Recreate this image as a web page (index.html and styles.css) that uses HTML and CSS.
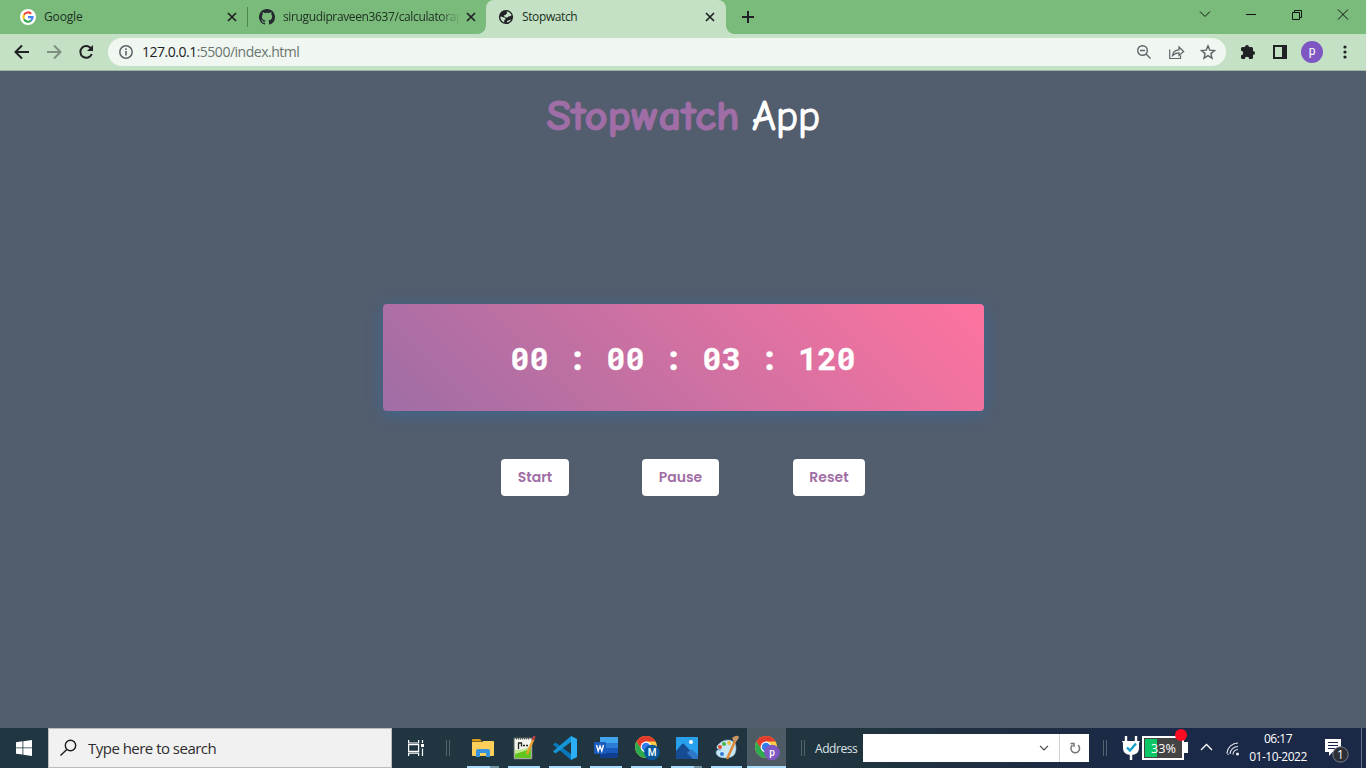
FILE: index.html
```
<!DOCTYPE html>
<html lang="en">
<head>
<meta charset="utf-8">
<title>Stopwatch</title>
<link rel="stylesheet" href="styles.css">
</head>
<body>
<div class="screen">
  <header class="tabs">
    <div class="tab tab-google">
      <svg class="fav" width="16" height="16" viewBox="0 0 16 16"><circle cx="8" cy="8" r="8" fill="#fff"/><g fill="none" stroke-width="2.1"><path d="M4 5.7A4.6 4.6 0 0 1 11.2 4.7" stroke="#ea4335"/><path d="M4 5.7A4.8 4.8 0 0 0 4 10.3" stroke="#fbbc05"/><path d="M4 10.3A4.6 4.6 0 0 0 11 11.6" stroke="#34a853"/><path d="M8 8.1H12.6A4.6 4.6 0 0 1 11 11.6" stroke="#4285f4"/></g></svg>
      <span class="tab-title t-google">Google</span>
      <svg class="close" width="10" height="10" viewBox="0 0 10 10"><path d="M1 1l8 8M9 1l-8 8"/></svg>
    </div>
    <div class="tab tab-github">
      <svg class="fav" width="16" height="16" viewBox="0 0 16 16"><path fill="#24292f" d="M8 0C3.58 0 0 3.58 0 8c0 3.54 2.29 6.53 5.47 7.59.4.07.55-.17.55-.38 0-.19-.01-.82-.01-1.49-2.01.37-2.53-.49-2.69-.94-.09-.23-.48-.94-.82-1.13-.28-.15-.68-.52-.01-.53.63-.01 1.08.58 1.23.82.72 1.21 1.87.87 2.33.66.07-.52.28-.87.51-1.07-1.78-.2-3.64-.89-3.64-3.95 0-.87.31-1.59.82-2.15-.08-.2-.36-1.02.08-2.12 0 0 .67-.21 2.2.82.64-.18 1.32-.27 2-.27s1.36.09 2 .27c1.53-1.04 2.2-.82 2.2-.82.44 1.1.16 1.92.08 2.12.51.56.82 1.27.82 2.15 0 3.07-1.87 3.75-3.65 3.95.29.25.54.73.54 1.48 0 1.07-.01 1.93-.01 2.2 0 .21.15.46.55.38A8.01 8.01 0 0 0 16 8c0-4.42-3.58-8-8-8z"/></svg>
      <span class="tab-title t-github">sirugudipraveen3637/calculatorap</span>
      <svg class="close" width="10" height="10" viewBox="0 0 10 10"><path d="M1 1l8 8M9 1l-8 8"/></svg>
    </div>
    <div class="tab tab-active">
      <svg class="fav" width="16" height="16" viewBox="0 0 16 16"><circle cx="8" cy="8" r="7.1" fill="#202124"/><path d="M8.200 2.400c2.400 0 4.500 1.400 5.300 3.600-.4 1.200-1.200 1.500-2.200 1.300-1.200-.1-1 1.100-2 1.200H7.600c-1.200-.2-1.200-1.500-2-2 .9-.3 1.800 0 2.300-.9.2-.8.8-.9 1.300-1.300.3-.8-.7-1-.7-1.700z" fill="#c5e1c5"/><path d="M2.300 7.500c1 .1 2 .5 3 .8 1.300.2 2.200.8 2.200 1.700-.3.8-1.200.8-1.300 1.700v1.700C3.800 12.700 2.100 10.500 2.300 7.500z" fill="#c5e1c5"/><path d="M8.800 13.600c.3-1.300.3-2 1.500-2.100 1-.1 1.500-.6 2.700-1-.8 1.800-2.300 2.900-4.200 3.100z" fill="#c5e1c5"/></svg>
      <span class="tab-title t-stop">Stopwatch</span>
      <svg class="close" width="10" height="10" viewBox="0 0 10 10"><path d="M1 1l8 8M9 1l-8 8"/></svg>
    </div>
    <svg class="plus" width="12" height="12" viewBox="0 0 12 12"><path d="M6 0v12M0 6h12" stroke="#202124" stroke-width="2"/></svg>
    <svg class="window-buttons" width="156" height="16" viewBox="0 0 156 16" fill="none" stroke="#101410" stroke-width="1"><path d="M3 5.500l5 5 5-5M49 8.500h10M95.500 6.500h7v7h-7zM97.500 6.500v-2h7v7h-2M141 3.500l10 10M151 3.500l-10 10"/></svg>
  </header>

  <nav class="toolbar">
    <svg class="nav-icons" width="80" height="16" viewBox="0 0 80 16" fill="none" stroke-width="2"><path d="M15 8H2M8 1.500L1.500 8 8 14.500" stroke="#202124"/><path d="M33 8h13M40 1.500L46.500 8 40 14.500" stroke="#7d8f7e"/><path d="M77.200 4.600A5.900 5.900 0 1 0 77.800 10" stroke="#202124"/><path d="M79 1v6h-6z" fill="#202124"/></svg>
    <div class="address-pill">
      <svg width="14" height="14" viewBox="0 0 14 14"><circle cx="7" cy="7" r="6.200" fill="none" stroke="#5f6368" stroke-width="1.500"/><path d="M7 6v4.500M7 3.300v1.600" stroke="#5f6368" stroke-width="1.600"/></svg>
      <span class="url">127.0.0.1<span class="url-path">:5500/index.html</span></span>
      <svg class="pill-icons" width="80" height="16" viewBox="0 0 80 16" fill="none" stroke="#5f6368" stroke-width="1.400"><circle cx="6.500" cy="6.500" r="4.800"/><path d="M10 10l4.500 4.500M4 6.500h5"/><path d="M33.700 5.500v9h10.800v-3M36.500 11.500c.4-4 2.900-5.500 6.500-5.700V3l4.700 4.500L43 11.500V8.800c-2.700 0-4.700.7-6.500 2.700z" stroke-width="1.200"/><path d="M72 1.900l1.800 4.200 4.700.4-3.600 3.100 1.100 4.600L72 11.700l-4 2.500 1.100-4.600-3.600-3.100 4.700-.4z"/></svg>
    </div>
    <svg class="ext" width="16" height="16" viewBox="0 0 16 16"><path fill="#202124" d="M1 4.500Q1 3 2.500 3H5a2 2 0 0 1 4 0h2.500Q13 3 13 4.500V7a2 2 0 0 1 0 4v2.500q0 1.500-1.500 1.500H9.200a2.200 2.200 0 0 0-4.400 0H2.500Q1 15 1 13.500v-2.300a2.200 2.200 0 0 0 0-4.400z"/></svg>
    <svg class="panel" width="14" height="14" viewBox="0 0 14 14"><path fill="#202124" fill-rule="evenodd" d="M0 0h14v14H0zM2 2v10h7V2z"/></svg>
    <span class="avatar">p</span>
    <svg class="dots" width="4" height="14" viewBox="0 0 4 14" fill="#202124"><circle cx="2" cy="2" r="1.600"/><circle cx="2" cy="7" r="1.600"/><circle cx="2" cy="12" r="1.600"/></svg>
  </nav>

  <main class="page">
    <h1 class="heading">
      <svg width="290" height="64" viewBox="0 0 290 64">
        <text class="heading-accent" x="9.500" y="44" textLength="193" lengthAdjust="spacingAndGlyphs">Stopwatch</text>
        <text class="heading-rest" x="215" y="44" textLength="68" lengthAdjust="spacingAndGlyphs">App</text>
      </svg>
    </h1>
    <section class="timer">
      <span class="num">00</span><span class="colon">:</span><span class="num">00</span><span class="colon">:</span><span class="num">03</span><span class="colon">:</span><span class="num num-ms">120</span>
    </section>
    <div class="buttons">
      <button class="btn b-start">Start</button>
      <button class="btn b-pause">Pause</button>
      <button class="btn b-reset">Reset</button>
    </div>
  </main>

  <footer class="taskbar">
    <div class="start-btn"><svg width="16" height="16" viewBox="0 0 16 16" fill="#fff"><path d="M0 2.200l6.500-.9v6.200H0zM7.300 1.200L16 0v7.500H7.300zM0 8.300h6.500v6.300L0 13.700zM7.300 8.300H16V16l-8.700-1.200z"/></svg></div>
    <div class="search">
      <svg width="18" height="18" viewBox="0 0 18 18" fill="none" stroke="#1c1c1c" stroke-width="1.400"><circle cx="10.500" cy="6.500" r="5.200"/><path d="M6.800 10.500L.5 16.500"/></svg>
      <span class="search-text">Type here to search</span>
    </div>
    <div class="taskview"><svg width="17" height="16" viewBox="0 0 17 16" fill="none" stroke="#fff" stroke-width="1.200"><path d="M.6 0v3h10V0M.6 4.600h10v6.800h-10zM.6 16v-2.900h10V16M14.500 0v3M14.500 8.500V16"/><path d="M13 4h3v3h-3z" fill="#fff" stroke="none"/></svg></div>
    <i class="grip"></i>
    <div class="apps">
      <div class="app split"><svg width="24" height="24" viewBox="0 0 24 24"><path d="M1 4q0-1 1-1h7l2 2.500H1z" fill="#dd9a13"/><path d="M1 6h10l1.500-1H22q1 0 1 1v13q0 1-1 1H2q-1 0-1-1z" fill="#ffcf5c"/><path d="M5 21v-6q0-2 2-2h10q2 0 2 2v6h-4v-4H9v4z" fill="#3793df"/></svg></div>
      <div class="app"><svg width="24" height="24" viewBox="0 0 24 24"><path d="M2 2h18v21H2z" fill="#f3f5ef" stroke="#59625a"/><path d="M3 16q8-1 16-5v11H3z" fill="#62c51e"/><path d="M3 14q9 0 16-4v3L3 18z" fill="#bce98c"/><path d="M6.500 13V7h3v3.500M11 9.500h2M14 9.500h2" stroke="#222" stroke-width="1.300" fill="none"/><path d="M4 2.500h14" stroke="#555" stroke-dasharray="1 1" stroke-width="2"/><path d="M21.500 3L15 18" stroke="#e8a12c" stroke-width="2.400"/><path d="M22.500 0l-1.500 4" stroke="#b9404a" stroke-width="2.600"/></svg></div>
      <div class="app"><svg width="24" height="24" viewBox="0 0 24 24"><path d="M0 8.500l2.500-2L18 18v6L1 9.500z" fill="#0878bd"/><path d="M0 15.500l2.500 2L18 6V0L1 14.500z" fill="#1594d8"/><path d="M18 0l6 3v18l-6 3z" fill="#2baef4"/></svg></div>
      <div class="app"><svg width="24" height="24" viewBox="0 0 24 24"><path d="M6 1h18v6H6z" fill="#41a5ee"/><path d="M6 7h18v5H6z" fill="#2b7cd3"/><path d="M6 12h18v5H6z" fill="#185abd"/><path d="M6 17h18v5H6z" fill="#103f91"/><rect y="6" width="12" height="12" rx="1" fill="#185abd"/><path d="M2.500 9l1.700 6L6 10l1.800 5 1.700-6" stroke="#fff" stroke-width="1.400" fill="none"/></svg></div>
      <div class="app app-narrow"><svg width="26" height="26" viewBox="0 0 26 26"><circle cx="12" cy="12" r="11" fill="#ffcd43"/><path d="M2.500 6.500A11 11 0 0 1 21.600 6.500H12l-5 8z" fill="#e33b2e"/><path d="M2.500 6.500A11 11 0 0 0 12 23l5-8.200L7.200 14z" fill="#2da94f"/><circle cx="12" cy="12" r="5.400" fill="#fff"/><circle cx="12" cy="12" r="4.200" fill="#327bea"/><circle cx="18" cy="17.500" r="7.800" fill="#07579b"/><text x="18" y="21.300" class="badge-letter">M</text></svg></div>
      <div class="app app-narrow split"><svg width="24" height="24" viewBox="0 0 24 24"><rect x="1" y="1" width="22" height="22" rx="1" fill="#29a0ed"/><path d="M1 15l6-7q1-1 2 0l14 15H1z" fill="#164c91"/><path d="M12 17l3.500-3q1-.8 2 0L23 19v4h-5z" fill="#3177c8"/><circle cx="16" cy="6" r="2" fill="#fff"/></svg></div>
      <div class="app app-narrow"><svg width="26" height="26" viewBox="0 0 26 26"><path d="M3 11Q8 4 16 5q7 2 6 10-1 8-10 8-9 0-10-5 0-4 5-3-5 0-4-4z" fill="#c9e8f7" stroke="#78a9c3" stroke-width=".6"/><circle cx="6" cy="12" r="2" fill="#e64b32"/><circle cx="10" cy="9" r="2" fill="#49b34c"/><circle cx="15" cy="8" r="1.900" fill="#f1bb35"/><circle cx="8" cy="19" r="2" fill="#3778d0"/><path d="M22 4L13 24" stroke="#db8a38" stroke-width="2.500"/><path d="M18 3q5-4 7-1-1 4-5 5z" fill="#c99564"/></svg></div>
      <div class="app app-current"><svg width="26" height="26" viewBox="0 0 26 26"><circle cx="12" cy="12" r="11" fill="#ffcd43"/><path d="M2.500 6.500A11 11 0 0 1 21.600 6.500H12l-5 8z" fill="#e33b2e"/><path d="M2.500 6.500A11 11 0 0 0 12 23l5-8.200L7.200 14z" fill="#2da94f"/><circle cx="12" cy="12" r="5.400" fill="#fff"/><circle cx="12" cy="12" r="4.200" fill="#327bea"/><circle cx="18" cy="17.500" r="7.800" fill="#7e57c2"/><text x="18" y="20.500" class="badge-letter">p</text></svg></div>
    </div>
    <i class="grip grip-two"></i>
    <span class="address-label">Address</span>
    <div class="address-box">
      <svg width="10" height="6" viewBox="0 0 10 6"><path d="M1 .8l4 4 4-4" fill="none" stroke="#444" stroke-width="1.200"/></svg>
      <div class="refresh"><svg width="12" height="12" viewBox="0 0 12 12" fill="none" stroke="#777" stroke-width="1.500"><path d="M9 3.200A4.300 4.300 0 1 1 3.500 3.200M1.500 1.500h3.500v3.500"/></svg></div>
    </div>
    <i class="grip grip-three"></i>
    <div class="battery">
      <svg width="68" height="40" viewBox="0 0 68 40"><path d="M4 8v6M14 8v6" stroke="#fff" stroke-width="2.400"/><path d="M0 13h18l-1 2v5q0 7-8 7t-8-7v-5z" fill="#fff"/><path d="M9 26v6" stroke="#fff" stroke-width="2.500"/><path d="M5 19.500l3 3 6-7" fill="none" stroke="#159fcb" stroke-width="2.400"/><rect x="21" y="9" width="40" height="22" fill="#444" stroke="#fff" stroke-width="2"/><path d="M62 14h4v11h-4z" fill="#fff"/><path d="M23 11h12v18H23z" fill="#0bc766"/><circle cx="59" cy="7" r="6" fill="#ff0c22"/><text x="29" y="25" class="percent" textLength="25" lengthAdjust="spacingAndGlyphs">33%</text></svg>
    </div>
    <svg class="tray" width="42" height="16" viewBox="0 0 42 16" fill="none" stroke="#fff" stroke-width="1.300"><path d="M1 10l5.500-5.500L12 10"/><g stroke="#e1e4ea" stroke-width="1.100"><path d="M27 13A11 11 0 0 1 38 3M30 14A8 8 0 0 1 38 6.500M33 14.500A5 5 0 0 1 38 9.500"/><path d="M27 12.500q0 2 2 2" opacity=".6"/><circle cx="37.500" cy="14" r="1" fill="#fff"/></g></svg>
    <div class="clock"><span class="time">06:17</span><span class="date">01-10-2022</span></div>
    <svg class="notice" width="26" height="26" viewBox="0 0 26 26"><path d="M0 1h16v13H7.500L4 18v-4H0z" fill="#fff"/><path d="M3 4.500h10M3 7.500h10M3 10.500h7" stroke="#1a2947"/><circle cx="15.500" cy="16.500" r="7.700" fill="#2c3036" stroke="#777f88"/><text x="15.500" y="21" class="notice-count">1</text></svg>
    <i class="desktop-edge"></i>
  </footer>
</div>
</body>
</html>
```
FILE: styles.css
```
* { box-sizing: border-box; }
body { margin: 0; overflow: hidden; }
svg { display: block; flex: none; }
.screen { display: flex; flex-direction: column; width: 1366px; height: 768px; font-family: "Segoe UI", "Open Sans", "Noto Sans", sans-serif; }

.tabs { display: flex; height: 34px; background: #7abb7c; }
.tab { display: flex; align-items: center; height: 34px; font-size: 12px; color: #203122; }
.tab-google { width: 248px; padding-left: 20px; }
.tab-google::after { content: ""; width: 1px; height: 20px; margin-left: 10px; background: #4c844e; }
.tab-github { width: 238px; padding-left: 11px; }
.tab-active { position: relative; width: 240px; padding-left: 12px; background: #c5e1c5; border-radius: 8px 8px 0 0; color: #203122; }
.tab-active::before, .tab-active::after { content: ""; position: absolute; bottom: 0; width: 8px; height: 8px; }
.tab-active::before { left: -8px; background: radial-gradient(circle at 0 0, transparent 7.5px, #c5e1c5 8px); }
.tab-active::after { right: -8px; background: radial-gradient(circle at 100% 0, transparent 7.5px, #c5e1c5 8px); }
.tab-title { flex: none; margin-left: 8px; padding-bottom: 1px; line-height: 17px; white-space: nowrap; }
.t-google { width: 183px; letter-spacing: -.15px; }
.t-github { width: 183px; letter-spacing: -.36px; -webkit-mask-image: linear-gradient(to right, #000 157px, transparent 177px); mask-image: linear-gradient(to right, #000 157px, transparent 177px); }
.t-stop { width: 183px; letter-spacing: -.38px; }
.close { fill: none; stroke: #202124; stroke-width: 1.700; }
.plus { margin: 11px 0 0 16px; }
.window-buttons { margin: 6px 0 0 443px; }

.toolbar { display: flex; align-items: center; height: 37px; background: #c5e1c5; border-bottom: 1px solid #9fb8a4; }
.nav-icons { margin-left: 14px; }
.address-pill { display: flex; align-items: center; width: 1118px; height: 28px; margin-left: 14px; padding-left: 11px; border-radius: 14px; background: #f0f7f1; }
.url { width: 994px; margin-left: 9px; font-size: 14px; letter-spacing: -.49px; line-height: 20px; color: #202124; }
.url-path { color: #6b7570; }
.ext { margin-left: 14px; }
.panel { margin-left: 17px; }
.avatar { width: 22px; height: 22px; margin-left: 14px; border-radius: 50%; background: #7e57c2; color: #fff; font: 12px/20px Roboto, sans-serif; text-align: center; }
.dots { margin-left: 20px; }

.page { display: flex; flex-direction: column; align-items: center; height: 657px; background: #525d6e; }
.heading { margin: 15px 0 0; padding-right: 2px; height: 64px; }
.heading text { font-family: "Comic Sans MS", "Comic Neue", "Noto Sans", sans-serif; font-size: 42px; font-weight: 700; stroke-linejoin: round; }
.heading .heading-accent { fill: #a06ea6; stroke: #a06ea6; stroke-width: 1px; }
.heading .heading-rest { fill: #fff; stroke: #fff; stroke-width: 1.200px; font-weight: 400; }
.timer { display: flex; align-items: center; justify-content: center; width: 601px; height: 107px; padding-top: 1px; margin-top: 154px; border-radius: 4px; background: linear-gradient(45deg, #9f6ea5, #ff739f); box-shadow: 0 3px 18px rgba(0, 139, 253, .25); color: #fff; font: 700 32px/42px "Roboto Mono", "Liberation Mono", monospace; -webkit-text-stroke: .3px #fff; }
.num { width: 38.400px; text-align: center; white-space: nowrap; }
.num-ms { width: 57.600px; }
.colon { width: 57.600px; text-align: center; }
.buttons { display: flex; margin-top: 48px; }
.btn { height: 37px; padding: 0 0 2px 0; border: 0; border-radius: 4px; background: #fff; color: #a06ea5; font: 600 14px/20px Poppins, Inter, sans-serif; }
.b-start { width: 68px; }
.b-pause { width: 77px; margin-left: 73px; }
.b-reset { width: 72px; margin-left: 74px; }

.taskbar { display: flex; align-items: center; height: 40px; background: linear-gradient(90deg, #203640 0, #20353f 60%, #1e2f41 72%, #1a2947 84%, #1b2947 100%); color: #fff; }
.start-btn { display: flex; align-items: center; justify-content: center; width: 48px; }
.search { display: flex; align-items: center; width: 344px; height: 40px; padding-left: 11px; border: 1px solid #b8bcbf; background: #f1f1f1; color: #2d2d2d; }
.search-text { margin-left: 10px; font-size: 15px; letter-spacing: -.52px; white-space: nowrap; }
.taskview { margin-left: 16px; }
.grip { width: 4px; height: 16px; margin-left: 21px; border: solid #53646d; border-width: 0 1px; }
.apps { display: flex; height: 40px; margin-left: 13px; }
.app { position: relative; display: flex; align-items: center; justify-content: center; width: 41px; height: 40px; padding-right: 2px; }
.app::after { content: ""; position: absolute; bottom: 0; left: 4px; right: 5px; height: 2px; background: #a9dcfa; }
.split::after { background: linear-gradient(90deg, #a9dcfa 23px, #7596a7 23px); }
.app-narrow { width: 40px; padding-right: 1px; }
.app-current { width: 39px; padding-right: 0; background: #4d5c64; }
.app-current::after { left: 0; right: 0; }
.badge-letter { fill: #fff; font: 500 10px Roboto, sans-serif; text-anchor: middle; }
.grip-two { margin-left: 15px; }
.address-label { width: 48px; margin-left: 10px; font-size: 12px; letter-spacing: -.45px; color: #dfe4e6; }
.address-box { display: flex; align-items: center; justify-content: flex-end; width: 226px; height: 28px; background: #fff; }
.refresh { display: flex; align-items: center; justify-content: center; width: 30px; height: 28px; margin-left: 10px; border-left: 1px solid #d2d2d2; }
.grip-three { margin-left: 14px; }
.battery { margin-left: 15px; height: 40px; }
.percent { fill: #fff; font-size: 13px; }
.tray { margin-left: 10px; }
.clock { display: flex; flex-direction: column; align-items: center; width: 60px; margin-left: 6px; font-size: 12px; line-height: 18px; letter-spacing: -.5px; white-space: nowrap; }
.notice { margin: 6px 0 0 17px; }
.notice-count { fill: #fff; font-size: 12px; text-anchor: middle; }
.desktop-edge { width: 1px; height: 40px; margin-left: 10px; background: #65708a; }
```
